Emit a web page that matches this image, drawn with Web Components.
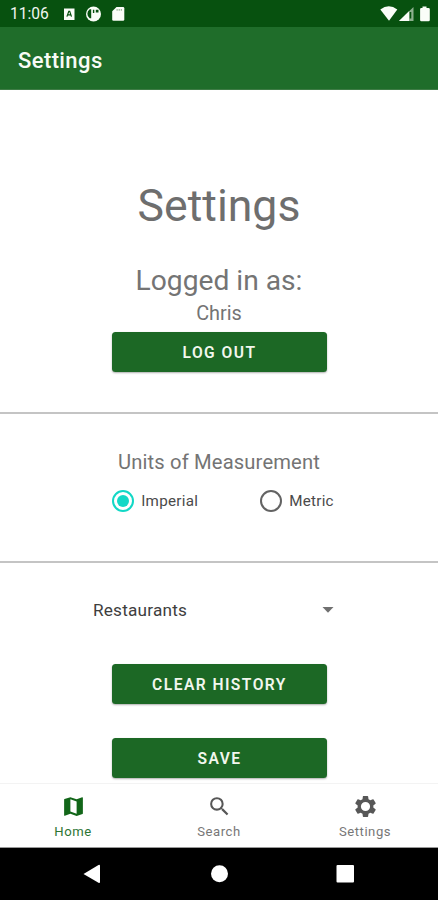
<!DOCTYPE html>
<html lang="en">
<head>
<meta charset="utf-8">
<title>Settings</title>
<style>
html,body{margin:0;height:100%;background:#fff}
body{font-family:Roboto,"Liberation Sans",sans-serif;overflow:hidden}
</style>
</head>
<body>
<settings-screen></settings-screen>
<script>
const define = (name, css, html) => customElements.define(name, class extends HTMLElement {
  constructor() {
    super();
    const t = document.createElement('template');
    t.innerHTML = `<style>:host{box-sizing:border-box}${css}</style>${html}`;
    this.attachShadow({mode: 'open'}).append(t.content.cloneNode(true));
  }
});

define('status-bar', `
:host{display:flex;justify-content:space-between;height:27px;padding:0 7px 0 10px;background:#07510f;color:#f1f6ef}
div{display:flex;align-items:center}
span{font-size:15.600px;line-height:27px;width:54px;padding-top:2px;box-sizing:border-box}
svg{display:block;fill:#fafdf8}`,
`<div><span>11:06</span>
<svg width="64" height="27" viewBox="64 0 64 27">
<path d="M63.500 8.500h11v11.500h-11z"/><path d="M66.900 16.600l1.900-5.200h.9l1.800 5.200M67.600 14.900h3.300" fill="none" stroke="#07510f" stroke-width="1.200"/>
<circle cx="93.500" cy="14" r="7.500"/><path d="M91.200 9.300h-1.500a5.500 5.500 0 0 0 0 9h1.500zM92.900 9.700h1.400v3.300h-1.400zM95.800 9.700h2.700v2.900h-2.700z" fill="#07510f"/>
<path d="M116.500 7h6.500q1.300 0 1.300 1.300v11.200q0 1.300-1.300 1.300h-9.500q-1.300 0-1.300-1.300v-8.200z"/>
<path d="M116.600 9h1v1.800h-1zM118.700 9h1v1.800h-1zM120.800 9h1v1.800h-1z" fill="#8ba989"/>
</svg></div>
<div><svg width="52" height="27" viewBox="379 0 52 27">
<path d="M380.300 9.400q8.500-6.500 17 0L389 20.800z"/>
<path d="M413.500 7v14H399z" opacity=".55"/><path d="M409 11.300V21H399z"/><path d="M409.700 12h1.600v6.500h-1.600z" fill="#07510f"/>
<path d="M422.500 6.500h4V8h2q1.300 0 1.300 1.300V20q0 1.200-1.300 1.200h-7.200q-1.200 0-1.200-1.200V9.300q0-1.300 1.200-1.300h1.200z"/>
</svg></div>`);

define('app-bar', `
:host{display:flex;align-items:center;height:63px;padding:5px 18px 0;background:#1f6d2a;color:#f8fbf5;border-bottom:1px solid #3e7c45;font-size:22px;font-weight:550;letter-spacing:.4px;line-height:28px}`,
`<slot></slot>`);

define('app-button', `
:host{display:flex;align-items:center;justify-content:center;width:215px;height:40px;border-radius:3.500px;background:#1c6825;color:#f2f7ee;font-size:15.600px;font-weight:600;letter-spacing:1.450px;line-height:20px;padding:2px 0 0 1px;box-shadow:0 1px 2px rgba(0,0,0,.32)}`,
`<slot></slot>`);

define('radio-option', `
:host{display:flex;align-items:center;gap:7px;font-size:15.200px;letter-spacing:.27px;line-height:22px;color:#4a4a4a}
i{box-sizing:border-box;width:22px;height:22px;border:2px solid #636363;border-radius:50%;display:grid;place-items:center}
:host([checked]) i{border-color:#12d8c6}
:host([checked]) i::after{content:"";width:12px;height:12px;border-radius:50%;background:#12d8c6}
span{padding-top:1px}`,
`<i></i><span><slot></slot></span>`);

define('select-field', `
:host{display:flex;align-items:center;justify-content:space-between;width:241px;height:24px;font-size:17.200px;letter-spacing:.2px;line-height:24px;color:#3e3e3e}
svg{fill:#707070}`,
`<slot></slot><svg width="12" height="6" viewBox="0 0 12 6"><path d="M.5 0h11L6 5.800z"/></svg>`);

define('page-section', `
:host{display:flex;flex-direction:column;align-items:center;border-bottom:2px solid #c4c4c4}
:host([last]){border:0}`, `<slot></slot>`);

define('nav-item', `
:host{display:flex;flex:1;flex-direction:column;align-items:center;color:#777;font-size:13.100px;letter-spacing:.55px;line-height:16px;padding-top:10px}
:host([active]){color:#2c7534}
::slotted(svg){display:block;width:25px;height:25px;fill:#575757;margin-bottom:5px}
:host([active]) ::slotted(svg){fill:#126619}`,
`<slot name="icon"></slot><span><slot></slot></span>`);

define('bottom-nav', `
:host{display:flex;height:65px;background:#fff;border-top:1px solid #f3f3f3;border-bottom:1px solid #999}`, `<slot></slot>`);

define('system-nav', `
:host{display:block;height:52px;background:#000}
svg{display:block;fill:#fff}`,
`<svg width="438" height="52" viewBox="0 848 438 52"><path d="M83.500 873.900 98.500 865q1.500-.7 1.500 1v15.800q0 1.700-1.500 1z"/><circle cx="219.500" cy="873.700" r="8.500"/><rect x="336.500" y="865" width="17.500" height="17.500" rx="1"/></svg>`);

define('settings-screen', `
:host{display:flex;flex-direction:column;width:438px;height:900px;background:#fff;color:#747474}
h1,h2,h3,p{margin:0;font-weight:370}
.account{height:324px;padding-top:89px}
h1{font-size:44.600px;line-height:54px;color:#6e6e6e}
h2{font-size:28.200px;line-height:34px;margin-top:31px}
p{font-size:19.900px;line-height:24px;margin:4px 0 6px}
.units{height:149px;padding-top:35px}
h3{font-size:20.200px;letter-spacing:.15px;line-height:26px}
.options{display:flex;gap:62px;margin:14px 0 0 8px}
.history{height:220px;padding-top:35px}
select-field{margin:0 0 42px -11px}
app-button + app-button{margin-top:34px}`,
`<status-bar></status-bar><app-bar>Settings</app-bar>
<page-section class="account"><h1>Settings</h1><h2>Logged in as:</h2><p>Chris</p><app-button>LOG OUT</app-button></page-section>
<page-section class="units"><h3>Units of Measurement</h3><div class="options"><radio-option checked>Imperial</radio-option><radio-option>Metric</radio-option></div></page-section>
<page-section class="history" last><select-field>Restaurants</select-field><app-button>CLEAR HISTORY</app-button><app-button>SAVE</app-button></page-section>
<bottom-nav>
<nav-item active><svg slot="icon" viewBox="0 0 24 24"><path d="M20.500 3l-.16.030L15 5.100 9 3 3.360 4.900c-.21.070-.36.250-.36.480V20.500c0 .280.220.500.500.500l.160-.030L9 18.900l6 2.100 5.640-1.900c.210-.070.360-.250.360-.480V3.500c0-.280-.220-.500-.500-.500zM15 19l-6-2.110V5l6 2.110V19z"/></svg>Home</nav-item>
<nav-item><svg slot="icon" viewBox="0 0 24 24"><path d="M15.500 14h-.79l-.28-.27A6.471 6.471 0 0 0 16 9.500 6.500 6.500 0 1 0 9.500 16c1.610 0 3.090-.59 4.230-1.570l.27.28v.79l5 4.990L20.490 19l-4.990-5zm-6 0C7.010 14 5 11.990 5 9.500S7.010 5 9.500 5 14 7.010 14 9.500 11.990 14 9.500 14z"/></svg>Search</nav-item>
<nav-item><svg slot="icon" viewBox="0 0 24 24"><path transform="translate(12 12) scale(1.050) translate(-12 -12)" d="M19.140 12.940c.040-.3.060-.61.060-.94 0-.32-.020-.64-.070-.94l2.030-1.580a.49.49 0 0 0 .12-.61l-1.920-3.320a.488.488 0 0 0-.59-.22l-2.390.96c-.5-.38-1.030-.7-1.620-.94l-.36-2.540a.484.484 0 0 0-.48-.41h-3.840c-.24 0-.43.170-.47.410l-.36 2.540c-.59.240-1.130.570-1.620.940l-2.390-.96c-.22-.08-.47 0-.59.220L2.740 8.870c-.12.210-.08.470.12.610l2.030 1.580c-.05.300-.09.630-.09.940s.020.640.070.940l-2.030 1.580a.49.49 0 0 0-.12.610l1.920 3.320c.12.220.370.290.590.220l2.390-.96c.5.380 1.030.700 1.620.940l.36 2.540c.05.240.240.410.480.410h3.840c.24 0 .44-.17.470-.41l.36-2.540c.59-.24 1.130-.56 1.620-.94l2.390.96c.22.080.470 0 .59-.22l1.920-3.320c.12-.22.070-.47-.12-.61l-2.010-1.580zM12 16.200A4.200 4.200 0 1 1 12 7.800a4.200 4.200 0 0 1 0 8.400z"/></svg>Settings</nav-item>
</bottom-nav><system-nav></system-nav>`);
</script>
</body>
</html>
